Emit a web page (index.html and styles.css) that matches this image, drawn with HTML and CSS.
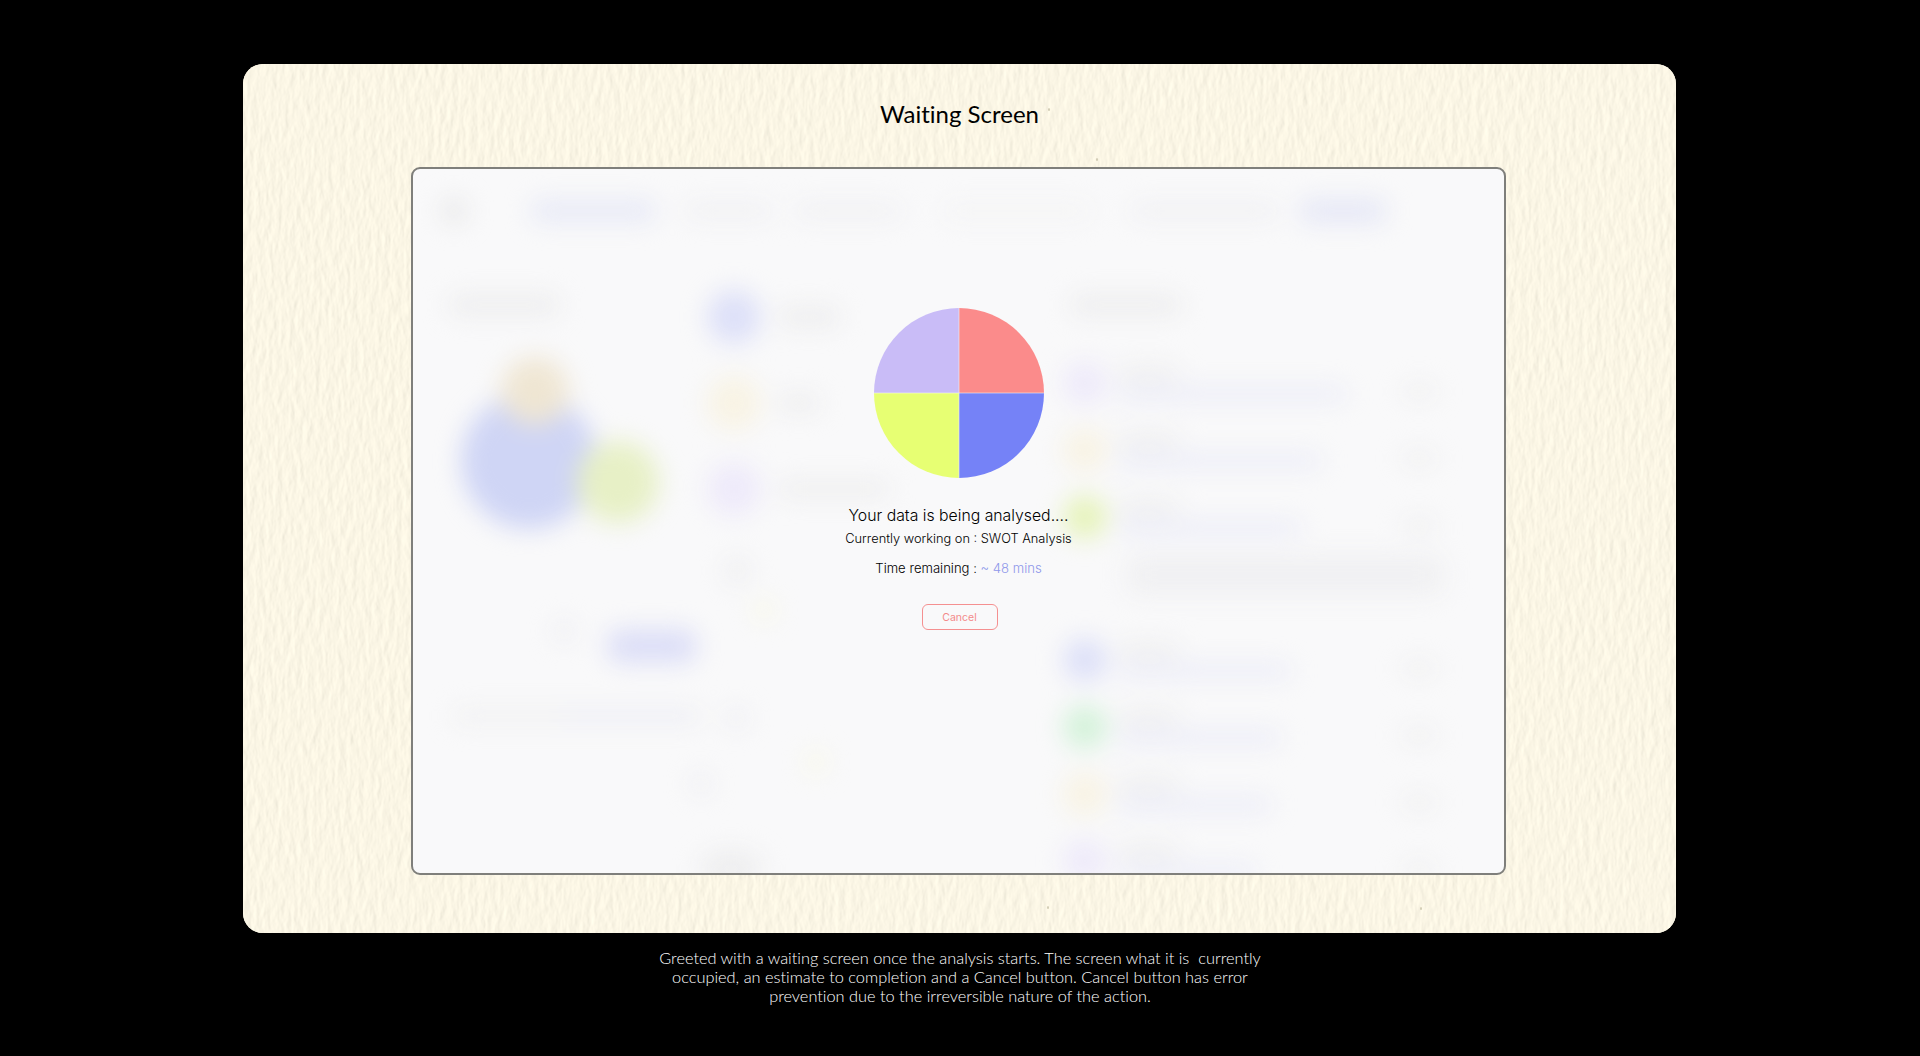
FILE: index.html
```html
<!DOCTYPE html>
<html>

<head>
  <title>Waiting Screen</title>
  <link rel="stylesheet" href="styles.css">
</head>

<body>
  <div class="card">
    <svg class="paper" width="100%" height="100%">
      <filter id="grain" x="0" y="0" width="100%" height="100%">
        <feTurbulence type="fractalNoise" baseFrequency="0.16 0.06" numOctaves="4" seed="7" />
        <feDiffuseLighting surfaceScale="0.45" diffuseConstant="1.13" lighting-color="#fbf6e5">
          <feDistantLight azimuth="10" elevation="62" />
        </feDiffuseLighting>
      </filter>
      <rect width="100%" height="100%" filter="url(#grain)" />
    </svg>
    <span class="speck" style="left: 805px; top: 44px"></span>
    <span class="speck" style="left: 853px; top: 94px"></span>
    <span class="speck" style="left: 1177px; top: 843px"></span>
    <span class="speck" style="left: 804px; top: 842px"></span>

    <h1 class="title">Waiting Screen</h1>

    <div class="frame">
      <div class="app">
        <div class="nav">
          <span class="logo"></span>
          <span class="tab tab-active"></span>
          <span class="tab tab-two"></span>
          <span class="tab tab-three"></span>
          <span class="tab tab-faint"></span>
          <span class="tab tab-four"></span>
          <span class="tab tab-btn"></span>
        </div>

        <div class="columns">
          <div class="col-left">
            <div class="line grey heading"></div>
            <div class="bubbles">
              <span class="bubble bubble-blue"></span>
              <span class="bubble bubble-tan"></span>
              <span class="bubble bubble-green"></span>
            </div>
          </div>

          <div class="col-mid">
            <div class="stat"><span class="dot blue"></span><span class="line grey w60"></span></div>
            <div class="stat"><span class="dot tan"></span><span class="line grey w40"></span></div>
            <div class="stat"><span class="dot lilac"></span><span class="line grey w100"></span></div>
          </div>

          <div class="col-right">
            <div class="line grey heading"></div>
            <div class="row"><span class="icon lilac"></span><div class="row-text"><span class="line grey short"></span><span class="line pale" style="width: 230px"></span></div><span class="pill"></span></div>
            <div class="row"><span class="icon tan"></span><div class="row-text"><span class="line grey short"></span><span class="line pale" style="width: 205px"></span></div><span class="pill"></span></div>
            <div class="row"><span class="icon lime"></span><div class="row-text"><span class="line grey short"></span><span class="line pale" style="width: 185px"></span></div><span class="pill"></span></div>
            <div class="para"></div>
            <div class="row"><span class="icon blue"></span><div class="row-text"><span class="line grey short"></span><span class="line pale" style="width: 175px"></span></div><span class="pill"></span></div>
            <div class="row"><span class="icon mint"></span><div class="row-text"><span class="line grey short"></span><span class="line pale" style="width: 165px"></span></div><span class="pill"></span></div>
            <div class="row"><span class="icon tan"></span><div class="row-text"><span class="line grey short"></span><span class="line pale" style="width: 155px"></span></div><span class="pill"></span></div>
            <div class="row"><span class="icon lilac"></span><div class="row-text"><span class="line grey short"></span><span class="line pale" style="width: 140px"></span></div><span class="pill"></span></div>
          </div>
        </div>

        <span class="smudge smudge-dot" style="left: 140px; top: 451px"></span>
        <span class="smudge smudge-btn"></span>
        <span class="smudge smudge-bar"></span>
        <span class="smudge smudge-barblue"></span>
        <span class="smudge smudge-dot" style="left: 312px; top: 538px"></span>
        <span class="smudge smudge-dot" style="left: 277px; top: 604px"></span>
        <span class="smudge smudge-yellow" style="left: 340px; top: 430px"></span>
        <span class="smudge smudge-yellow" style="left: 392px; top: 582px"></span>
        <span class="smudge smudge-foot"></span>
        <span class="smudge smudge-top"></span>
      </div>

      <div class="wait">
        <svg class="pie" width="172" height="172" viewBox="0 0 172 172">
          <path d="M86 86V1A85 85 0 0 1 171 86Z" fill="#fb8b8b" />
          <path d="M86 86H171A85 85 0 0 1 86 171Z" fill="#7582f7" />
          <path d="M86 86V171A85 85 0 0 1 1 86Z" fill="#e7ff73" />
          <path d="M86 86H1A85 85 0 0 1 86 1Z" fill="#c9bcf7" />
          <path d="M86 1V171M1 86H171" stroke="#f4f4f4" stroke-width="0.6" />
        </svg>
        <p class="wait-title">Your data is being analysed....</p>
        <p class="wait-step">Currently working on : SWOT Analysis</p>
        <p class="wait-time">Time remaining : <span class="eta">~ 48 mins</span></p>
        <button class="cancel">Cancel</button>
      </div>
    </div>
  </div>

  <p class="caption">Greeted with a waiting screen once the analysis starts. The screen what it is&nbsp; currently<br>occupied, an estimate to completion and a Cancel button. Cancel button has error<br>prevention due to the irreversible nature of the action.</p>
</body>

</html>
```

FILE: styles.css
```css
body {
  margin: 0;
  height: 1056px;
  overflow: hidden;
  background: #000;
  display: flex;
  flex-direction: column;
  align-items: center;
  padding-top: 64px;
  box-sizing: border-box;
  font-family: "Inter", "Liberation Sans", sans-serif;
}

.card {
  position: relative;
  width: 1433px;
  height: 869px;
  margin-left: -1px;
  border-radius: 20px;
  overflow: hidden;
  background: #fbf6e4;
  display: flex;
  flex-direction: column;
  align-items: center;
}

.paper {
  position: absolute;
  left: 0;
  top: 0;
}

.speck {
  position: absolute;
  width: 2px;
  height: 3px;
  border-radius: 50%;
  background: #d2ccb4;
}

.title {
  position: relative;
  margin: 35px 0 0 0;
  height: 68px;
  line-height: 30px;
  font-family: "Lato", sans-serif;
  font-size: 24px;
  font-weight: 400;
  font-variant-ligatures: none;
  color: #000;
}

.frame {
  position: relative;
  width: 1095px;
  height: 708px;
  margin-left: -2px;
  box-sizing: border-box;
  border: 2px solid #7f7f7b;
  border-radius: 9px;
  overflow: hidden;
  background: #f9f9fa;
}

/* blurred app behind the waiting message */
.app {
  position: absolute;
  left: 0;
  top: 0;
  right: 0;
  bottom: 0;
  filter: blur(12px);
}

.nav {
  display: flex;
  align-items: center;
  height: 84px;
  padding-left: 28px;
}

.logo {
  width: 26px;
  height: 26px;
  border-radius: 50%;
  background: #e8e8e9;
}

.tab {
  height: 16px;
  border-radius: 8px;
  background: #f0f0f3;
}

.tab-active {
  width: 125px;
  margin-left: 64px;
  height: 22px;
  background: #e7e9f6;
}

.tab-two {
  width: 90px;
  margin-left: 28px;
}

.tab-three {
  width: 108px;
  margin-left: 20px;
}

.tab-faint {
  width: 150px;
  margin-left: 40px;
  background: #f4f4f5;
}

.tab-four {
  width: 150px;
  margin-left: 38px;
}

.tab-btn {
  width: 86px;
  height: 24px;
  margin-left: 20px;
  background: #e5e7f6;
}

.columns {
  display: grid;
  grid-template-columns: 258px 372px 1fr;
  padding: 42px 0 0 36px;
}

.line {
  display: block;
  height: 12px;
  border-radius: 6px;
}

.grey {
  background: #ededee;
}

.pale {
  background: #e8e9f7;
}

.heading {
  width: 110px;
  height: 20px;
}

.bubbles {
  position: relative;
  height: 220px;
}

.bubble {
  position: absolute;
  border-radius: 50%;
}

.bubble-blue {
  left: 12px;
  top: 78px;
  width: 136px;
  height: 136px;
  background: #cfd5f5;
}

.bubble-tan {
  left: 52px;
  top: 42px;
  width: 68px;
  height: 68px;
  background: #efe6d3;
}

.bubble-green {
  left: 128px;
  top: 126px;
  width: 82px;
  height: 82px;
  background: #e7f0c6;
}

.col-mid {
  display: flex;
  flex-direction: column;
  gap: 32px;
  margin-top: -5px;
}

.stat {
  display: flex;
  align-items: center;
  gap: 18px;
  height: 54px;
}

.dot {
  flex: none;
  width: 54px;
  height: 54px;
  border-radius: 50%;
}

.w40 {
  width: 40px;
  height: 18px;
}

.w60 {
  width: 60px;
  height: 20px;
}

.w100 {
  width: 110px;
  height: 16px;
}

.blue {
  background: #dde0f8;
}

.tan {
  background: #f8f3e4;
}

.lilac {
  background: #eeeafa;
}

.lime {
  background: #e6f3bb;
}

.mint {
  background: #d4f2da;
}

.col-right .heading {
  margin-bottom: 34px;
  margin-left: -8px;
}

.row {
  display: flex;
  align-items: center;
  height: 67px;
  margin-left: -16px;
}

.icon {
  flex: none;
  width: 44px;
  height: 44px;
  border-radius: 50%;
}

.row-text {
  display: flex;
  flex-direction: column;
  gap: 8px;
  width: 285px;
  margin-left: 10px;
}

.short {
  width: 62px;
  height: 14px;
}

.pill {
  width: 34px;
  height: 13px;
  border-radius: 6px;
  margin-top: 18px;
  background: #eeeeef;
}

.para {
  height: 40px;
  width: 318px;
  margin: 5px 0 31px 47px;
  border-radius: 10px;
  background: #f0f0f2;
}

.smudge {
  position: absolute;
  border-radius: 50%;
}

.smudge-dot {
  width: 22px;
  height: 22px;
  background: #eeeef3;
}

.smudge-yellow {
  width: 22px;
  height: 22px;
  background: #f8f8e8;
}

.smudge-btn {
  left: 194px;
  top: 460px;
  width: 90px;
  height: 34px;
  border-radius: 14px;
  background: #dcdef7;
}

.smudge-bar {
  left: 40px;
  top: 540px;
  width: 250px;
  height: 14px;
  border-radius: 6px;
  background: #f0f0f1;
}

.smudge-barblue {
  left: 150px;
  top: 543px;
  width: 130px;
  height: 10px;
  border-radius: 5px;
  background: #ebecf6;
}

.smudge-foot {
  left: 286px;
  top: 680px;
  width: 64px;
  height: 40px;
  background: #eeeeef;
}

.smudge-top {
  left: 310px;
  top: 388px;
  width: 28px;
  height: 28px;
  background: #efeff1;
}

/* message on top of the blur */
.wait {
  position: absolute;
  left: 0;
  top: 0;
  right: 0;
  display: flex;
  flex-direction: column;
  align-items: center;
  padding-top: 138px;
  color: #000;
}

.pie {
  display: block;
}

.wait p {
  margin: 0;
}

.wait-title {
  margin-top: 25px !important;
  font-size: 15.8px;
  font-weight: 300;
  line-height: 24px;
}

.wait-step {
  font-size: 12.8px;
  font-weight: 300;
  line-height: 20px;
  margin-top: 1px !important;
}

.wait-time {
  font-size: 13.1px;
  font-weight: 300;
  line-height: 20px;
  margin-top: 9px !important;
}

.eta {
  color: #8f98ea;
}

.cancel {
  width: 76px;
  height: 26px;
  margin-top: 26px;
  margin-left: 2px;
  padding: 0;
  background: transparent;
  border: 1px solid #f59090;
  border-radius: 6px;
  font-family: inherit;
  font-size: 10.5px;
  color: #f48a8a;
}

.caption {
  margin: 15px 0 0 0;
  color: #fff;
  text-align: center;
  font-family: "Lato", sans-serif;
  font-size: 16.35px;
  font-weight: 300;
  font-variant-ligatures: none;
  line-height: 19px;
}
```
